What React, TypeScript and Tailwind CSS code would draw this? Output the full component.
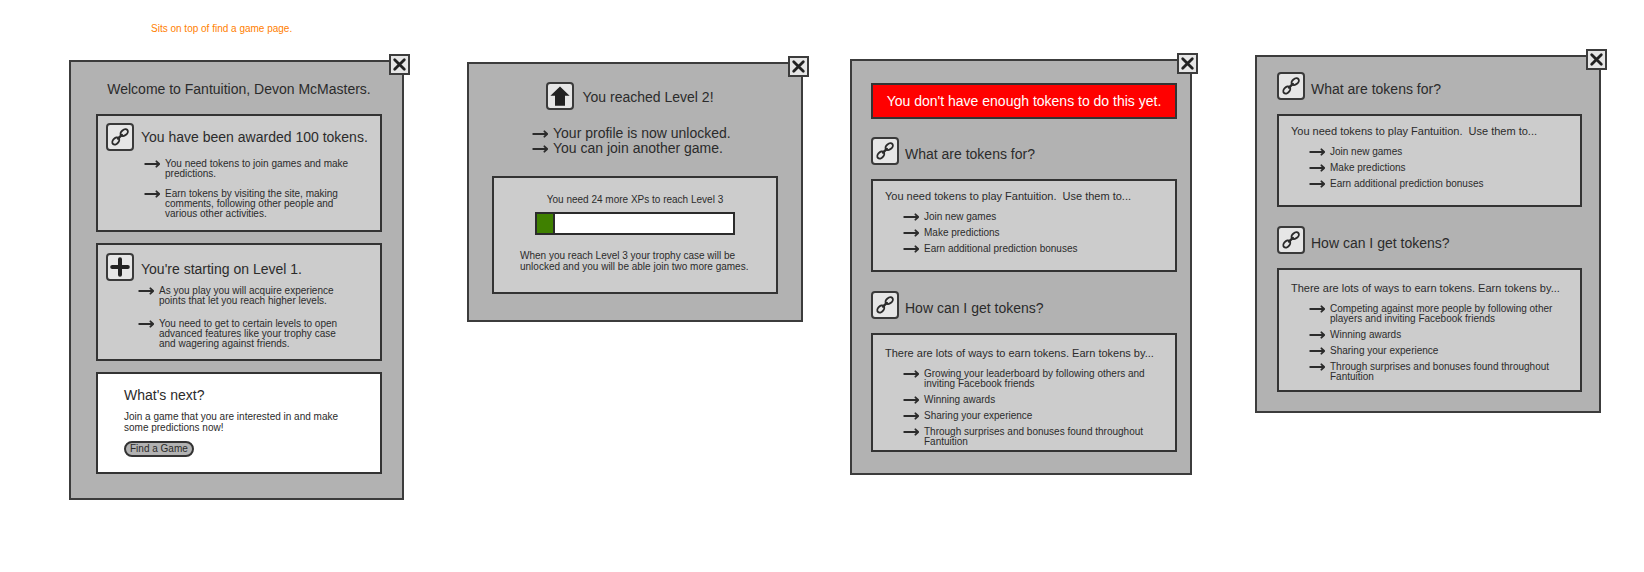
import type { ReactNode } from "react";

const LINE = "#2b2b2b";

function ArrowIcon() {
  return (
    <svg className="h-[10px] w-4 shrink-0" viewBox="0 0 16 10" fill="none" stroke={LINE} strokeWidth="1.8" strokeLinecap="round" strokeLinejoin="round" aria-hidden="true">
      <path d="M1.2 5H15M12.4 2.3L15.2 5L12.4 7.7" />
    </svg>
  );
}

function ChainIcon() {
  return (
    <svg className="h-6 w-6 shrink-0" viewBox="0 0 24 24" fill="none" stroke={LINE} strokeWidth="1.9" strokeLinecap="round" aria-hidden="true">
      <ellipse cx="7.8" cy="16" rx="4.1" ry="2.8" transform="rotate(-48 7.8 16)" />
      <ellipse cx="16.2" cy="7.6" rx="4.1" ry="2.8" transform="rotate(-38 16.2 7.6)" />
      <path d="M10 13.6L13.8 9.9" strokeWidth="2.3" />
    </svg>
  );
}

function PlusIcon() {
  return (
    <svg className="h-6 w-6 shrink-0" viewBox="0 0 24 24" fill="none" stroke="#222" strokeWidth="4" strokeLinecap="round" aria-hidden="true">
      <path d="M12 4.2V19.8M4.2 12H19.8" />
    </svg>
  );
}

function UpIcon() {
  return (
    <svg className="h-6 w-6 shrink-0" viewBox="0 0 24 24" fill="#222" aria-hidden="true">
      <path d="M12 2.4L21.6 11.8H17V21.8H7V11.8H2.4Z" />
    </svg>
  );
}

function IconTile({ children }: { children: ReactNode }) {
  return (
    <span className="flex h-7 w-7 shrink-0 items-center justify-center rounded-[4px] border-2 border-[#3a3a3a] bg-[#e6e6e6]">
      {children}
    </span>
  );
}

function Dialog({ label, className, children }: { label: string; className: string; children: ReactNode }) {
  return (
    <section role="dialog" aria-label={label} className={`relative border-2 border-[#3c3c3c] bg-[#b2b2b2] ${className}`}>
      <button type="button" aria-label="Close" className="absolute -top-2 -right-2 flex h-[21px] w-[21px] items-center justify-center border-2 border-[#3c3c3c] bg-[#e6e6e6]">
        <svg className="h-[17px] w-[17px] shrink-0" viewBox="0 0 17 17" fill="none" stroke="#222" strokeWidth="2.8" strokeLinecap="round" aria-hidden="true">
          <path d="M3.7 3.7L13.3 13.3M13.3 3.7L3.7 13.3" />
        </svg>
      </button>
      {children}
    </section>
  );
}

function Box({ className, children }: { className: string; children: ReactNode }) {
  return <div className={`border-2 border-[#333] ${className}`}>{children}</div>;
}

function Bullets({ items, className }: { items: string[]; className: string }) {
  return (
    <ul className={`flex flex-col text-[10px] leading-[10px] ${className}`}>
      {items.map((item) => (
        <li key={item} className="flex gap-[5px]">
          <ArrowIcon />
          <span>{item}</span>
        </li>
      ))}
    </ul>
  );
}

function TokenHeading({ children }: { children: ReactNode }) {
  return (
    <div className="flex items-center gap-[6px]">
      <IconTile><ChainIcon /></IconTile>
      <h2 className="pt-[6px] text-[14px] leading-4">{children}</h2>
    </div>
  );
}

function TokenHelp({ ways, waysPadding }: { ways: string[]; waysPadding: string }) {
  return (
    <div className="flex flex-col gap-[19px]">
      <div>
        <TokenHeading>What are tokens for?</TokenHeading>
        <Box className="mt-[14px] bg-[#ccc] pt-[7px] pb-4 pl-3">
          <p className="text-[11px] leading-4 whitespace-pre-wrap">{"You need tokens to play Fantuition.  Use them to..."}</p>
          <Bullets className="mt-2 gap-[6px] pl-[18px]" items={["Join new games", "Make predictions", "Earn additional prediction bonuses"]} />
        </Box>
      </div>
      <div>
        <TokenHeading>How can I get tokens?</TokenHeading>
        <Box className={`mt-[14px] bg-[#ccc] pt-[10px] pl-3 ${waysPadding}`}>
          <p className="text-[11px] leading-4">There are lots of ways to earn tokens. Earn tokens by...</p>
          <Bullets className="mt-2 max-w-[268px] gap-[6px] pl-[18px]" items={ways} />
        </Box>
      </div>
    </div>
  );
}

export default function App() {
  return (
    <main className="grid grid-cols-[351fr_336fr_358fr_346fr] items-start gap-x-[47px] pt-5 pr-[43px] pb-12 pl-[69px] font-['Liberation_Sans',Arial,sans-serif] text-[#2b2b2b]">
      <div className="min-w-0 pr-4">
        <p className="pl-[82px] text-[10px] leading-[18px] text-[#ff8000]">Sits on top of find a game page.</p>
        <Dialog label="Welcome" className="mt-[22px] pt-[19px] pr-5 pb-6 pl-[25px]">
          <h1 className="text-center text-[14px] leading-4">Welcome to Fantuition, Devon McMasters.</h1>
          <div className="mt-[17px] flex flex-col gap-[11px]">
            <Box className="bg-[#ccc] pt-[7px] pb-[11px] pl-2">
              <div className="flex items-center gap-[7px]">
                <IconTile><ChainIcon /></IconTile>
                <h2 className="text-[14px] leading-4">You have been awarded 100 tokens.</h2>
              </div>
              <Bullets
                className="mt-2 max-w-[246px] gap-[10px] pl-[38px]"
                items={[
                  "You need tokens to join games and make predictions.",
                  "Earn tokens by visiting the site, making comments, following other people and various other activities.",
                ]}
              />
            </Box>
            <Box className="bg-[#ccc] pt-2 pb-[10px] pl-2">
              <div className="flex items-center gap-[7px]">
                <IconTile><PlusIcon /></IconTile>
                <h2 className="pt-1 text-[14px] leading-4">You're starting on Level 1.</h2>
              </div>
              <Bullets
                className="mt-[5px] max-w-[240px] gap-[13px] pl-8"
                items={[
                  "As you play you will acquire experience points that let you reach higher levels.",
                  "You need to get to certain levels to open advanced features like your trophy case and wagering against friends.",
                ]}
              />
            </Box>
            <Box className="bg-white px-[26px] pt-[13px] pb-[15px]">
              <h2 className="text-[14px] leading-4">What's next?</h2>
              <p className="mt-2 max-w-[220px] text-[10px] leading-[11px]">Join a game that you are interested in and make some predictions now!</p>
              <button type="button" className="mt-2 flex h-4 items-center rounded-full border-2 border-[#333] bg-[#b2b2b2] px-1 text-[10px] leading-3">
                Find a Game
              </button>
            </Box>
          </div>
        </Dialog>
      </div>

      <Dialog label="Level reached" className="mt-[42px] px-[23px] pt-[18px] pb-[26px]">
        <div className="flex items-center justify-center gap-2 pr-[10px]">
          <IconTile><UpIcon /></IconTile>
          <h2 className="pt-[2px] text-[14px] leading-4">You reached Level 2!</h2>
        </div>
        <ul className="mt-4 flex flex-col pl-10 text-[14px] leading-[15px]">
          {["Your profile is now unlocked.", "You can join another game."].map((item) => (
            <li key={item} className="flex items-center gap-[5px]">
              <ArrowIcon />
              <span>{item}</span>
            </li>
          ))}
        </ul>
        <Box className="mt-5 bg-[#ccc] px-[26px] pt-[17px] pb-5">
          <p id="xp-label" className="text-center text-[10px] leading-[10px]">You need 24 more XPs to reach Level 3</p>
          <div role="progressbar" aria-labelledby="xp-label" aria-valuenow={9} aria-valuemin={0} aria-valuemax={100} className="mx-[15px] mt-[7px] h-[23px] border-2 border-[#2b2b2b] bg-white">
            <div className="h-full w-[9%] border-r-2 border-[#2b2b2b] bg-[#3f8000]" />
          </div>
          <p className="mt-[15px] text-[10px] leading-[11px]">When you reach Level 3 your trophy case will be unlocked and you will be able join two more games.</p>
        </Box>
      </Dialog>

      <div className="min-w-0 pr-4 pt-[39px]">
        <Dialog label="Not enough tokens" className="pt-[22px] pr-[13px] pb-[21px] pl-[19px]">
          <Box className="mb-[18px] bg-[#ff0000] py-2">
            <p role="alert" className="text-center text-[14px] leading-4 text-white">You don't have enough tokens to do this yet.</p>
          </Box>
          <TokenHelp
            waysPadding="pb-[3px]"
            ways={[
              "Growing your leaderboard by following others and inviting Facebook friends",
              "Winning awards",
              "Sharing your experience",
              "Through surprises and bonuses found throughout Fantuition",
            ]}
          />
        </Dialog>
      </div>

      <Dialog label="About tokens" className="mt-[35px] pt-[15px] pr-[17px] pb-[19px] pl-5">
        <TokenHelp
          waysPadding="pb-2"
          ways={[
            "Competing against more people by following other players and inviting Facebook friends",
            "Winning awards",
            "Sharing your experience",
            "Through surprises and bonuses found throughout Fantuition",
          ]}
        />
      </Dialog>
    </main>
  );
}
